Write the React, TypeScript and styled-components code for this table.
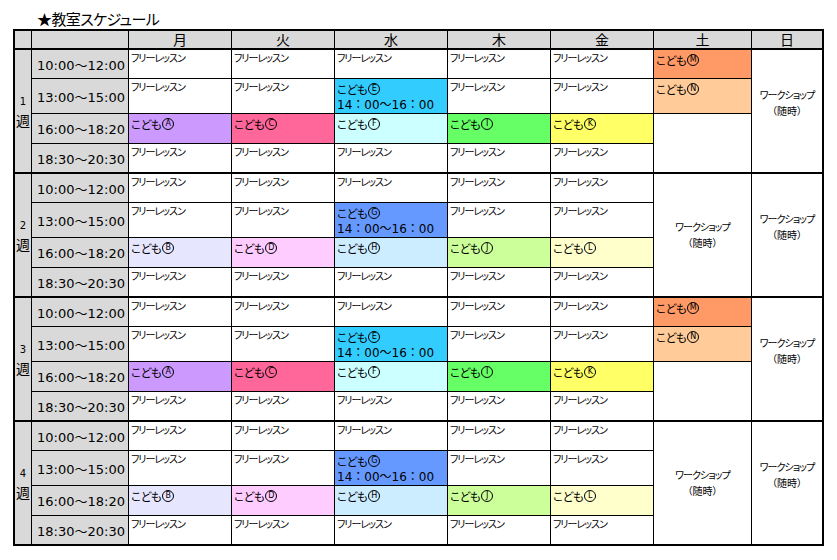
import React from "react";
import styled, { createGlobalStyle } from "styled-components";

const GlobalStyle = createGlobalStyle`
  html, body { margin: 0; padding: 0; background: #fff; }
  body { font-family: "Noto Sans CJK JP", sans-serif; color: #000; }
`;

const COLS = "16px 96px 102px 102px 112px 102px 102px 97px 70px";
const GRAY = "#d9d9d9";

const Page = styled.div`
  width: 837px;
  height: 560px;
  box-sizing: border-box;
  padding-left: 13px;
`;

const Title = styled.h1`
  margin: 0 0 0 24px;
  height: 29px;
  box-sizing: border-box;
  padding-top: 10px;
  font-family: "Noto Sans CJK JP", sans-serif;
  font-feature-settings: "palt";
  font-size: 15px;
  font-weight: normal;
  letter-spacing: -0.6px;
  line-height: 18px;
`;

const Table = styled.div`
  display: flex;
  flex-direction: column;
  gap: 2px;
  width: fit-content;
  padding: 2px;
  background: #000;
`;

const HeaderRow = styled.div`
  display: grid;
  grid-template-columns: ${COLS};
  grid-template-rows: 17px;
  column-gap: 1px;
`;

const HeadCell = styled.div`
  background: ${GRAY};
  display: flex;
  align-items: center;
  justify-content: center;
  font-size: 14px;
  line-height: 17px;
`;

const Week = styled.div`
  display: grid;
  grid-template-columns: ${COLS};
  grid-template-rows: 28px 34px 29px 28px;
  gap: 1px;
`;

const WeekLabel = styled.div`
  grid-column: 1;
  grid-row: 1 / span 4;
  background: ${GRAY};
  display: flex;
  flex-direction: column;
  align-items: center;
  justify-content: center;
  font-size: 14px;
  line-height: 19px;
`;

const WeekNum = styled.span`
  font-family: "DejaVu Sans", sans-serif;
  font-size: 10px;
`;

const TimeCell = styled.div<{ $row: number }>`
  grid-column: 2;
  grid-row: ${(p) => p.$row};
  background: ${GRAY};
  display: flex;
  align-items: center;
  justify-content: center;
  padding-left: 2px;
  font-family: "DejaVu Sans", "Noto Sans CJK JP", sans-serif;
  font-size: 13px;
`;

const Slot = styled.div<{ $col: number; $row: number; $span: number; $bg: string }>`
  grid-column: ${(p) => p.$col};
  grid-row: ${(p) => p.$row} / span ${(p) => p.$span};
  background: ${(p) => p.$bg};
  padding: 1px 2px 0;
  display: flex;
  flex-direction: column;
  align-items: flex-start;
  font-feature-settings: "palt";
  overflow: hidden;
`;

const FreeText = styled.span`
  font-size: 10px;
  line-height: 13px;
  letter-spacing: -1px;
`;

const KidsText = styled.span`
  display: inline-flex;
  align-items: center;
  font-size: 11.5px;
  line-height: 16px;
  margin-top: 1px;
  letter-spacing: -0.4px;
`;

const Circled = styled.span`
  display: inline-flex;
  align-items: center;
  justify-content: center;
  box-sizing: border-box;
  width: 12px;
  height: 12px;
  margin-left: 1px;
  border: 1px solid #000;
  border-radius: 50%;
  font-family: "DejaVu Sans", sans-serif;
  font-size: 8px;
  line-height: 1;
  letter-spacing: 0;
`;

const KidsTime = styled.span`
  font-family: "DejaVu Sans", "Noto Sans CJK JP", sans-serif;
  font-size: 12px;
  line-height: 17px;
  font-feature-settings: normal;
`;

const WorkshopCell = styled.div<{ $col: number; $row: number; $span: number; $raised?: boolean }>`
  grid-column: ${(p) => p.$col};
  grid-row: ${(p) => p.$row} / span ${(p) => p.$span};
  background: #fff;
  display: flex;
  flex-direction: column;
  align-items: center;
  justify-content: center;
  padding-bottom: ${(p) => (p.$raised ? "16px" : "0")};
  font-size: 10px;
  line-height: 16px;
  font-feature-settings: "palt";
`;

const WorkshopName = styled.span`
  letter-spacing: -1px;
`;

const WorkshopNote = styled.span`
  letter-spacing: 0;
`;

type Cell =
  | { kind: "free" }
  | { kind: "kids"; letter: string; bg: string; time?: string }
  | { kind: "empty"; span: number }
  | { kind: "workshop"; span: number; raised?: boolean };

const F: Cell = { kind: "free" };
const K = (letter: string, bg: string, time?: string): Cell => ({ kind: "kids", letter, bg, time });

const TIMES = ["10:00～12:00", "13:00～15:00", "16:00～18:20", "18:30～20:30"];
const DAYS = ["月", "火", "水", "木", "金", "土", "日"];

// columns by day (月..日), cells listed top to bottom
const weekA: Cell[][] = [
  [F, F, K("A", "#cc99ff"), F],
  [F, F, K("C", "#ff6699"), F],
  [F, K("E", "#33ccff", "14：00～16：00"), K("F", "#ccffff"), F],
  [F, F, K("I", "#66ff66"), F],
  [F, F, K("K", "#ffff66"), F],
  [K("M", "#ff9966"), K("N", "#ffcc99"), { kind: "empty", span: 2 }],
  [{ kind: "workshop", span: 4, raised: true }],
];

const weekB: Cell[][] = [
  [F, F, K("B", "#e6e6ff"), F],
  [F, F, K("D", "#ffccff"), F],
  [F, K("G", "#6699ff", "14：00～16：00"), K("H", "#ccecff"), F],
  [F, F, K("J", "#ccff99"), F],
  [F, F, K("L", "#ffffcc"), F],
  [{ kind: "workshop", span: 4 }],
  [{ kind: "workshop", span: 4, raised: true }],
];

const renderColumn = (cells: Cell[], col: number) => {
  let row = 1;
  return cells.map((c, i) => {
    const r = row;
    const span = c.kind === "empty" || c.kind === "workshop" ? c.span : 1;
    row += span;
    const key = `${col}-${i}`;
    if (c.kind === "workshop") {
      return (
        <WorkshopCell key={key} $col={col} $row={r} $span={span} $raised={c.raised}>
          <WorkshopName>ワークショップ</WorkshopName>
          <WorkshopNote>（随時）</WorkshopNote>
        </WorkshopCell>
      );
    }
    if (c.kind === "empty") {
      return <Slot key={key} $col={col} $row={r} $span={span} $bg="#fff" />;
    }
    if (c.kind === "kids") {
      return (
        <Slot key={key} $col={col} $row={r} $span={1} $bg={c.bg}>
          <KidsText>
            こども<Circled>{c.letter}</Circled>
          </KidsText>
          {c.time && <KidsTime>{c.time}</KidsTime>}
        </Slot>
      );
    }
    return (
      <Slot key={key} $col={col} $row={r} $span={1} $bg="#fff">
        <FreeText>フリーレッスン</FreeText>
      </Slot>
    );
  });
};

const WeekBlock: React.FC<{ n: number; data: Cell[][] }> = ({ n, data }) => (
  <Week>
    <WeekLabel>
      <WeekNum>{n}</WeekNum>
      <span>週</span>
    </WeekLabel>
    {TIMES.map((t, i) => (
      <TimeCell key={t} $row={i + 1}>
        {t}
      </TimeCell>
    ))}
    {data.map((cells, d) => renderColumn(cells, d + 3))}
  </Week>
);

export default function App() {
  return (
    <Page>
      <GlobalStyle />
      <Title>★教室スケジュール</Title>
      <Table>
        <HeaderRow>
          <HeadCell />
          <HeadCell />
          {DAYS.map((d) => (
            <HeadCell key={d}>{d}</HeadCell>
          ))}
        </HeaderRow>
        <WeekBlock n={1} data={weekA} />
        <WeekBlock n={2} data={weekB} />
        <WeekBlock n={3} data={weekA} />
        <WeekBlock n={4} data={weekB} />
      </Table>
    </Page>
  );
}
